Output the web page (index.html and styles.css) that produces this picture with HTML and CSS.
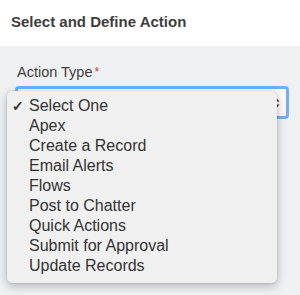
FILE: index.html
```html
<!DOCTYPE html>
<html>
<head>
    <meta charset="UTF-8">
    <title>Select and Define Action</title>
    <link rel="stylesheet" href="styles.css">
</head>
<body>
    <div class="header">
        <h2>Select and Define Action</h2>
    </div>

    <div class="panel">
        <label class="field-label">Action Type<span class="required">*</span></label>
        <div class="select-wrap">
            <div class="select-box">
                <span class="arrows">
                    <svg width="7" height="12" viewBox="0 0 7 12">
                        <path d="M0.5 4.5L3.5 1L6.5 4.5z" fill="#333"/>
                        <path d="M0.5 7.5L3.5 11L6.5 7.5z" fill="#333"/>
                    </svg>
                </span>
            </div>

            <ul class="menu">
                <li class="checked">Select One</li>
                <li>Apex</li>
                <li>Create a Record</li>
                <li>Email Alerts</li>
                <li>Flows</li>
                <li>Post to Chatter</li>
                <li>Quick Actions</li>
                <li>Submit for Approval</li>
                <li>Update Records</li>
            </ul>
        </div>
    </div>
</body>
</html>
```

FILE: styles.css
```css
:root {
    --text: #3e3e3c;
    --panel: #eff0f2;
    --focus: #74aef0;
    --menu: #f0f0f0;
}

body {
    margin: 0;
    font-family: 'Liberation Sans', Arial, sans-serif;
    color: var(--text);
    background: var(--panel);
    height: 295px;
    overflow: hidden;
}

.header {
    background: white;
    height: 46px;
    padding: 0 11px;
    box-sizing: border-box;
}

.header h2 {
    margin: 0;
    padding-top: 12px;
    font-size: 15px;
    font-weight: bold;
    line-height: 20px;
}

.panel {
    padding: 17px 11px 0 15px;
}

.field-label {
    display: block;
    font-size: 14.5px;
    line-height: 18px;
    padding-left: 2px;
    color: #3e3e3c;
}

.required {
    color: #c23934;
    margin-left: 2px;
    font-size: 12px;
    vertical-align: top;
}

.select-wrap {
    position: relative;
    margin-top: 5px;
}

.select-box {
    height: 33px;
    border: 3px solid var(--focus);
    border-radius: 4px;
    background: #fafafa;
    box-sizing: border-box;
    display: flex;
    align-items: center;
    justify-content: flex-end;
    padding-right: 6px;
}

.arrows {
    display: flex;
}

.menu {
    position: absolute;
    top: 5px;
    left: -8px;
    width: 270px;
    margin: 0;
    padding: 5px 0 7px;
    list-style: none;
    background: var(--menu);
    border-radius: 5px;
    box-shadow: 0 3px 10px rgba(0, 0, 0, 0.25), 0 0 0 0.5px rgba(0, 0, 0, 0.12);
}

.menu li {
    position: relative;
    padding-left: 22px;
    font-size: 16px;
    line-height: 20px;
    color: #333;
}

.menu li.checked::before {
    content: "\2713";
    position: absolute;
    left: 5px;
    font-size: 14px;
    font-weight: bold;
}
```
